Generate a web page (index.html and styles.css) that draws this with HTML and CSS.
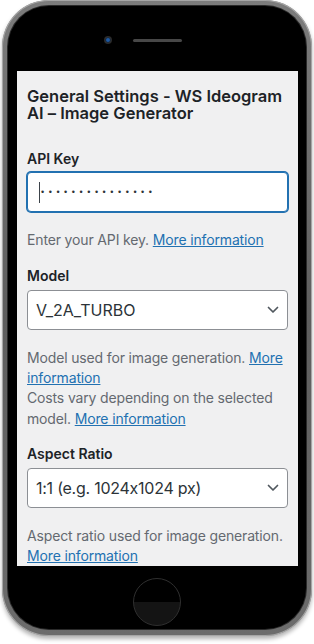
FILE: index.html
```html
<!DOCTYPE html>
<html lang="en">
<head>
<meta charset="utf-8">
<title>General Settings - WS Ideogram AI</title>
<link rel="stylesheet" href="styles.css">
</head>
<body>
<div class="stage">
  <div class="phone">
    <span class="hw mute"></span>
    <span class="hw vol-up"></span>
    <span class="hw vol-down"></span>
    <span class="hw power"></span>
    <div class="bezel">
      <div class="top-bar">
        <span class="camera"></span>
        <span class="speaker"></span>
        <span class="spacer"></span>
      </div>
      <div class="screen">
        <h2 class="title">General Settings - WS Ideogram AI – Image Generator</h2>

        <div class="field field-first">
          <label class="label">API Key</label>
          <div class="control input is-focus"><span class="caret"></span><span class="dots">•••••••••••••••</span></div>
          <p class="desc">Enter your API key. <a href="#">More information</a></p>
        </div>

        <div class="field">
          <label class="label">Model</label>
          <div class="control select">
            <span class="value">V_2A_TURBO</span>
            <svg class="chevron" width="12" height="8" viewBox="0 0 12 8"><path d="M1.5 1.5 L6 6 L10.5 1.5" fill="none" stroke="#50575e" stroke-width="1.7" stroke-linecap="round" stroke-linejoin="round"/></svg>
          </div>
          <p class="desc">Model used for image generation. <a href="#">More information</a><br>Costs vary depending on the selected model. <a href="#">More information</a></p>
        </div>

        <div class="field">
          <label class="label">Aspect Ratio</label>
          <div class="control select">
            <span class="value value-ratio">1:1 (e.g. 1024x1024 px)</span>
            <svg class="chevron" width="12" height="8" viewBox="0 0 12 8"><path d="M1.5 1.5 L6 6 L10.5 1.5" fill="none" stroke="#50575e" stroke-width="1.7" stroke-linecap="round" stroke-linejoin="round"/></svg>
          </div>
          <p class="desc">Aspect ratio used for image generation. <a href="#">More information</a></p>
        </div>
      </div>
      <div class="bottom-bar">
        <span class="home"></span>
      </div>
    </div>
  </div>
</div>
</body>
</html>
```
FILE: styles.css
```css
* { box-sizing: border-box; }
html, body { margin: 0; padding: 0; background: #ffffff; }
body {
  font-family: Inter, "Noto Sans", sans-serif;
  font-feature-settings: "calt" 0;
  font-variant-numeric: proportional-nums;
}

.stage { width: 314px; height: 644px; padding-left: 2px; }

.phone {
  position: relative;
  width: 310px;
  height: 636px;
  padding: 6px 6px 7px;
  border-radius: 47px;
  background: linear-gradient(180deg, #7c7c7c 0%, #5e5e5e 50%, #6c6c6c 100%);
  box-shadow: inset 0 0 0 1px #a6a6a6, 0 3px 4px rgba(0, 0, 0, 0.3);
}

.hw { position: absolute; z-index: -1; background: #8a8a8a; border-radius: 1px; }
.mute { left: -8px; top: 76px; width: 4px; height: 22px; }
.vol-up { left: -8px; top: 131px; width: 4px; height: 45px; }
.vol-down { left: -8px; top: 189px; width: 4px; height: 45px; }
.power { right: -8px; top: 127px; width: 4px; height: 47px; }

.bezel {
  height: 100%;
  border-radius: 41px;
  background: #000;
  box-shadow: 0 0 0 1px #2a2a2a;
  display: flex;
  flex-direction: column;
}

.top-bar {
  height: 65px;
  flex: none;
  display: flex;
  justify-content: center;
  align-items: flex-start;
  gap: 21px;
  padding-top: 30px;
}
.camera {
  width: 8px; height: 8px; border-radius: 50%;
  background: radial-gradient(circle, #2364b4 0, #1b4f90 1.6px, #16263a 2.4px, #2e2e2e 3px, #262626 4px);
}
.speaker { width: 49px; height: 3px; margin-top: 2.5px; border-radius: 2px; background: #474747; }
.spacer { width: 8px; height: 8px; }

.screen {
  flex: none;
  height: 495px;
  margin: 0 8px 0 9px;
  background: #f0f0f1;
  overflow: hidden;
  padding: 16.8px 10px 0;
  color: #1d2327;
}

.title { margin: 0; font-size: 16.5px; line-height: 17.5px; font-weight: 600; }

.field { margin-top: 16.4px; }
.field-first { margin-top: 27.2px; }

.label { display: block; font-size: 14px; line-height: 18px; font-weight: 600; }

.control {
  height: 40px;
  margin-top: 4.5px;
  background: #fff;
  border: 1px solid #8c8f94;
  border-radius: 4px;
  display: flex;
  align-items: center;
  font-size: 16px;
  color: #2c3338;
}
.input.is-focus {
  border-color: #2271b1;
  box-shadow: 0 0 0 1px #2271b1;
  padding-left: 11px;
}
.caret { width: 1px; height: 21px; background: #3c434a; margin-right: 1px; }
.dots { font-family: "Liberation Sans", sans-serif; font-size: 9px; letter-spacing: 4.55px; color: #2c3338; }

.select { justify-content: space-between; padding: 0 8px 0 8px; }
.value-ratio { letter-spacing: -0.25px; }
.chevron { display: block; }

.desc { margin: 18px 0 0; font-size: 14px; line-height: 20.3px; letter-spacing: -0.15px; color: #646970; }
.desc a { color: #2271b1; text-decoration: underline; }

.bottom-bar { flex: none; height: 63px; display: flex; justify-content: center; padding-top: 12px; }
.home {
  width: 48px; height: 48px; border-radius: 50%;
  border: 1.5px solid #2f2f2f;
  background: linear-gradient(180deg, #000 0, #000 50%, #141414 50%, #141414 100%);
}
```
